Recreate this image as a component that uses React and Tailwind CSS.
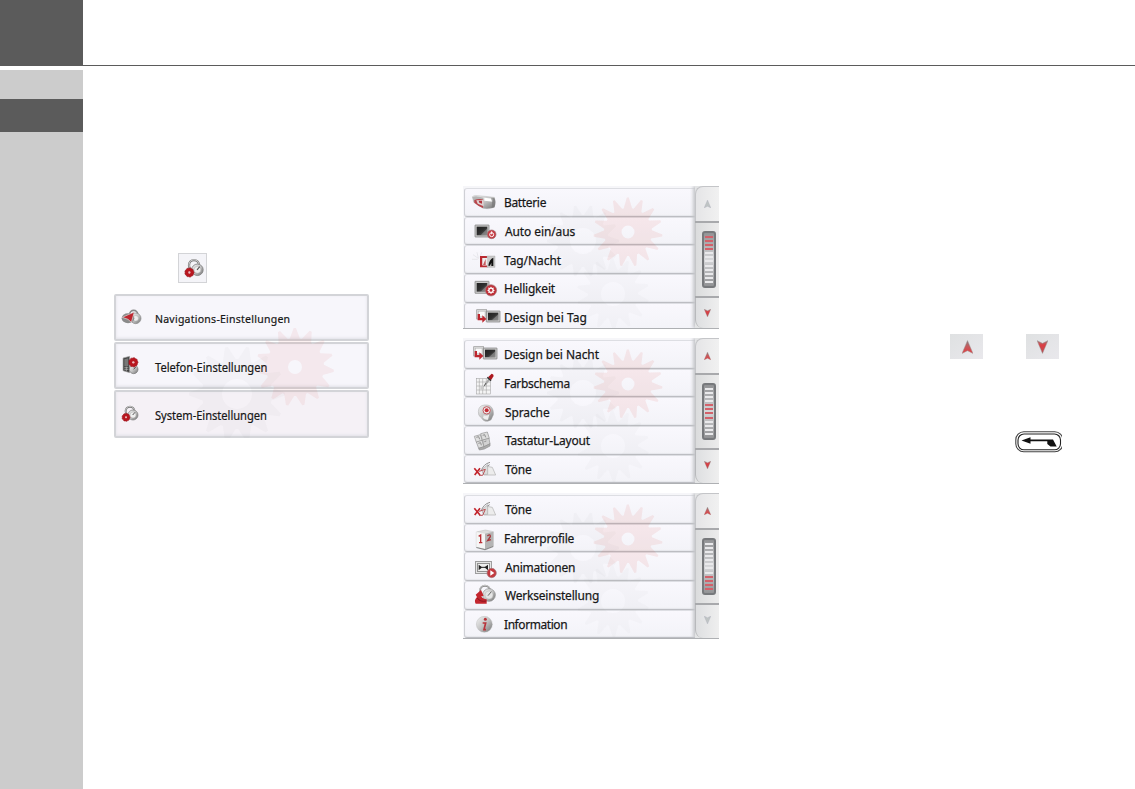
import React from 'react';

function gearPath(cx, cy, outer, inner, teeth, hole, twist = 0) {
  const pts = [];
  for (let i = 0; i < teeth; i++) {
    const step = (Math.PI * 2) / teeth;
    const a = i * step + twist;
    const at = (r, t) => `${(cx + r * Math.cos(t)).toFixed(2)} ${(cy + r * Math.sin(t)).toFixed(2)}`;
    pts.push(at(inner, a - step * 0.42), at(outer, a - step * 0.07), at(outer, a + step * 0.07), at(inner, a + step * 0.42));
  }
  return `M${pts.join('L')}Z M${cx + hole} ${cy}a${hole} ${hole} 0 1 0 ${-2 * hole} 0a${hole} ${hole} 0 1 0 ${2 * hole} 0Z`;
}

function Defs() {
  return (
    <svg className="absolute h-0 w-0" aria-hidden="true">
      <defs>
        <linearGradient id="metal" x1="0" y1="0" x2="1" y2="1">
          <stop offset="0" stopColor="#f4f4f4" />
          <stop offset="0.5" stopColor="#c4c4c4" />
          <stop offset="1" stopColor="#727272" />
        </linearGradient>
        <linearGradient id="dark" x1="0" y1="0" x2="1" y2="1">
          <stop offset="0" stopColor="#202020" />
          <stop offset="0.5" stopColor="#303030" />
          <stop offset="1" stopColor="#777" />
        </linearGradient>
        <linearGradient id="arrowUp" x1="0" y1="0" x2="0" y2="1">
          <stop offset="0" stopColor="#8a7f7f" />
          <stop offset="0.5" stopColor="#c9595c" />
          <stop offset="1" stopColor="#e03c40" />
        </linearGradient>
        <linearGradient id="arrowDown" x1="0" y1="0" x2="0" y2="1">
          <stop offset="0" stopColor="#a08080" />
          <stop offset="0.35" stopColor="#dc3d43" />
          <stop offset="1" stopColor="#b85054" />
        </linearGradient>
      </defs>
    </svg>
  );
}

function RedGear({ x, y, r }) {
  return (
    <g>
      <path d={gearPath(x, y, r, r * 0.92, 9, r * 0.2)} fill="#b9161f" fillRule="evenodd" stroke="#9c1720" strokeWidth="2" strokeLinejoin="round" />
      <circle cx={x} cy={y} r={r * 0.25} fill="#f0b9bb" />
    </g>
  );
}

function Lock() {
  return (
    <g>
      <circle cx="33" cy="24" r="13" fill="none" stroke="#777" strokeWidth="6" />
      <circle cx="33" cy="23" r="13" fill="none" stroke="#d4d4d4" strokeWidth="2.5" />
      <circle cx="42" cy="36" r="15" fill="url(#metal)" stroke="#777" strokeWidth="2" />
      <circle cx="42" cy="36" r="9" fill="#eee" stroke="#999" />
      <path d="M41 36L48 28" stroke="#555" strokeWidth="3" />
    </g>
  );
}

const Monitor = ({ x, y, w, h }) => (
  <g>
    <rect x={x} y={y} width={w} height={h} rx="1" fill="#c9c9c9" stroke="#777" strokeWidth="2" />
    <rect x={x + 5} y={y + 5} width={w - 10} height={h - 10} fill="url(#dark)" />
    <path d={`M${x + w * 0.4} ${y + h - 5}L${x + w - 5} ${y + h * 0.3}V${y + h - 5}Z`} fill="#999" opacity=".6" />
  </g>
);

const icons = {
  battery: (
    <g>
      <path d="M4 17Q8 11 24 14L70 19Q76 34 70 49Q52 56 36 52L8 34Z" fill="url(#metal)" stroke="#aaa" />
      <path d="M4 18Q14 12 36 20V50L8 33Z" fill="#b5b5b5" />
      <path d="M10 27Q24 22 37 26L36 51Q22 46 10 35Z" fill="#b9444a" />
      <path d="M16 28L38 27V46L20 38Z" fill="#ded3d3" />
      <path d="M23 29L33 29V38L25 35Z" fill="#b2343c" />
      <path d="M40 20L66 23V32L40 29Z" fill="#fff" />
      <path d="M60 22Q66 36 61 52L70 49Q76 34 70 21Z" fill="#777" opacity=".7" />
    </g>
  ),
  auto: (
    <g>
      <Monitor x={12} y={15} w={42} h={36} />
      <circle cx="62" cy="43" r="13" fill="#c63b43" stroke="#9d7376" strokeWidth="2" />
      <circle cx="62" cy="44" r="6" fill="none" stroke="#fff" strokeWidth="3" />
      <path d="M62 34V43" stroke="#fff" strokeWidth="3" />
    </g>
  ),
  dayNight: (
    <g>
      <path d="M6 17L23 29M18 10L22 27M32 10L27 25M3 31H20" stroke="#e0e0e4" strokeWidth="2" />
      <path d="M27 21H49V27H35V49H49V55H27Z" fill="#ba2a31" />
      <path d="M48 21H72V55H48Z" fill="#c9c9c9" stroke="#999" />
      <path d="M34 27H49V49H34Z" fill="#eee" />
      <path d="M36 48L44 30V48Z" fill="#c65a5f" />
      <path d="M52 50Q55 30 67 26V51H61V41L57 50Z" fill="#111" />
    </g>
  ),
  brightness: (
    <g>
      <Monitor x={12} y={13} w={42} h={36} />
      <circle cx="60" cy="40" r="17" fill="#bf3139" stroke="#a78183" strokeWidth="2" />
      <path d={gearPath(60, 40, 11, 8, 8, 4.5)} fill="#fff" fillRule="evenodd" />
    </g>
  ),
  design: (
    <g>
      <rect x="17" y="11" width="30" height="28" fill="#d5d5d5" stroke="#999" strokeWidth="2" />
      <rect x="23" y="16" width="19" height="16" fill="#fafafa" stroke="#aaa" />
      <Monitor x={46} y={15} w={41} h={33} />
      <path d="M20 24V43H34V50L46 39L34 28V36H27V24Z" fill="#bd252d" />
    </g>
  ),
  palette: (
    <g>
      <rect x="17" y="20" width="41" height="46" fill="#f4f4f4" stroke="#999" strokeWidth="1.5" />
      <path d="M25 20V66M35 20V66M46 20V66M17 30H58M17 42H58M17 54H58" stroke="#999" strokeWidth="1.5" />
      <path d="M28 42H39V53H28Z" fill="#ccc" />
      <path d="M42 39L56 20" stroke="#a7a7a7" strokeWidth="6" />
      <path d="M39 43L45 33" stroke="#555" strokeWidth="2.5" />
      <path d="M51 16L60 25L68 12Q68 6 62 5Z" fill="#ad1920" />
      <path d="M49 16L60 26" stroke="#333" strokeWidth="4" />
    </g>
  ),
  language: (
    <g>
      <path d="M22 32Q23 13 41 12Q61 10 66 27Q70 42 64 48Q62 59 50 61Q37 62 31 50Q21 45 22 32Z" fill="url(#metal)" stroke="#aaa" strokeWidth="1.5" />
      <circle cx="47" cy="28" r="11" fill="#eee" stroke="#c25a60" strokeWidth="3" />
      <circle cx="47" cy="28" r="6" fill="#c52a34" />
      <path d="M38 43Q50 45 55 40L51 56Q42 58 36 50Z" fill="#eee" />
    </g>
  ),
  keyboard: (
    <g stroke="#909090" strokeWidth="2">
      <path d="M10 22L28 17L34 34L16 40Z" fill="#e1e1e1" />
      <path d="M29 14L49 9L55 28L34 34Z" fill="#ddd" />
      <path d="M16 39L33 34L39 53L23 58Z" fill="#ddd" />
      <path d="M35 33L54 28L57 45L39 53Z" fill="#d2d2d2" />
      <path d="M23 58L39 53L57 44V51L40 60L25 63Z" fill="#aaa" />
      <path d="M16 25L23 23L26 31M35 19L41 17L44 25M22 43L29 41L31 49M40 38L46 36" fill="none" strokeWidth="3" />
    </g>
  ),
  sounds: (
    <g>
      <path d="M37 46L47 25L64 28L74 51H39Z" fill="#ececec" stroke="#b0b0b0" strokeWidth="2" />
      <path d="M30 40Q37 18 57 13M36 45Q43 26 56 20" fill="none" stroke="#929292" strokeWidth="3" />
      <path d="M33 35L50 20V49H37Z" fill="#ddd" stroke="#999" strokeWidth="1.5" />
      <path d="M10 31L27 51M11 51L27 31" stroke="#c2232b" strokeWidth="5" />
      <path d="M24 40L43 34L35 52H24" fill="none" stroke="#ba5056" strokeWidth="3" />
    </g>
  ),
  profile: (
    <g>
      <path d="M16 15L43 9L67 14V56L43 66L16 60Z" fill="#ddd" stroke="#bbb" strokeWidth="1.5" />
      <path d="M16 15L42 20V66L16 60Z" fill="#f5f5f5" />
      <path d="M42 20L67 14V56L42 66Z" fill="#b4b4b4" />
      <path d="M16 60L42 66L67 56V60L42 70L16 63Z" fill="#888" />
      <path d="M23 28L29 24V46M24 47H34" fill="none" stroke="#bc3037" strokeWidth="4" />
      <path d="M49 27Q59 19 58 29L50 41L60 38" fill="none" stroke="#a8383d" strokeWidth="4" />
    </g>
  ),
  animation: (
    <g>
      <rect x="14" y="16" width="47" height="37" fill="#e5e5e5" stroke="#777" strokeWidth="2" />
      <rect x="20" y="22" width="35" height="25" fill="#efefef" stroke="#666" strokeWidth="2" />
      <path d="M23 26L34 34L23 43ZM51 26L40 34L51 43Z" fill="#222" />
      <path d="M32 34H43" stroke="#222" strokeWidth="3" />
      <circle cx="62" cy="51" r="14" fill="#c33a40" stroke="#a4787b" strokeWidth="2" />
      <path d="M58 43L70 51L58 59Z" fill="#fff" />
    </g>
  ),
  factory: (
    <g>
      <circle cx="42" cy="20" r="15" fill="none" stroke="#888" strokeWidth="6" />
      <circle cx="42" cy="20" r="16" fill="none" stroke="#e4e4e4" strokeWidth="2" />
      <circle cx="54" cy="33" r="19" fill="url(#metal)" stroke="#888" strokeWidth="2" />
      <circle cx="54" cy="33" r="12" fill="#e5e5e5" stroke="#aaa" />
      <path d="M51 35L61 23" stroke="#666" strokeWidth="3" />
      <path d="M14 32L30 18L38 35L31 37Q34 45 47 46V59H14Q8 49 18 39Z" fill="#c3262e" />
      <path d="M19 42Q27 55 46 51" fill="none" stroke="#8c141e" strokeWidth="3" />
    </g>
  ),
  info: (
    <g>
      <circle cx="40" cy="34" r="24" fill="url(#metal)" stroke="#aaa" strokeWidth="1" />
      <circle cx="43" cy="19" r="4.5" fill="#b8343b" />
      <path d="M35 30H44L39 50H45" fill="none" stroke="#b8343b" strokeWidth="5" />
    </g>
  ),
  system: (
    <g>
      <Lock />
      <RedGear x={21} y={43} r={12} />
    </g>
  ),
  navigation: (
    <g>
      <circle cx="44" cy="22" r="12" fill="none" stroke="#888" strokeWidth="5" />
      <circle cx="50" cy="34" r="16" fill="url(#metal)" stroke="#888" strokeWidth="2" />
      <circle cx="50" cy="34" r="8" fill="#eee" stroke="#aaa" />
      <ellipse cx="27" cy="34" rx="19" ry="15" fill="#8a8a8a" />
      <path d="M10 31L46 15L37 46L27 37Z" fill="#bd252e" stroke="#ddd" strokeWidth="2" />
    </g>
  ),
  phone: (
    <g>
      <path d="M12 9L32 4V53L12 47Z" fill="#444" stroke="#aaa" strokeWidth="2" />
      <path d="M16 13L28 10V34L16 34Z" fill="#777" />
      <path d="M16 38H28M16 43H28M22 35V48" stroke="#bbb" strokeWidth="2" />
      <circle cx="44" cy="43" r="13" fill="url(#metal)" stroke="#777" strokeWidth="2" />
      <path d="M44 43L50 36" stroke="#555" strokeWidth="3" />
      <RedGear x={43} y={22} r={14} />
    </g>
  ),
};

function Icon({ name, shift = 0 }) {
  return (
    <svg className="h-[22px] w-7 shrink-0 overflow-visible" viewBox={`${shift} 0 84 66`}>
      {icons[name]}
    </svg>
  );
}

function Arrow({ down, muted, className }) {
  const fill = muted ? '#bfc4c4' : down ? 'url(#arrowDown)' : 'url(#arrowUp)';
  return (
    <svg className={className} viewBox="0 0 12 14">
      <path d={down ? 'M0 0L6 3L12 0L6 14Z' : 'M6 0L12 14L6 11L0 14Z'} fill={fill} stroke={muted ? '#aab' : '#999'} strokeWidth=".5" />
    </svg>
  );
}

function Scroller({ active, last, first }) {
  return (
    <div className="relative flex w-6 shrink-0 flex-col bg-[#e3e4e5] shadow-[-2px_0_3px_#c6c7cb]">
      <div className="flex h-[35px] items-center justify-center rounded-tl-lg border-l border-t border-[#c4c5c8] bg-linear-to-r from-[#e5e5e7] to-[#f1f1f1]">
        <Arrow muted={first} className="h-2 w-[7px]" />
      </div>
      <div className="h-0.5 bg-[#a8a9ac]" />
      <div className="flex h-[73px] items-start justify-center border-l border-[#c5c6c8] bg-linear-to-r from-[#dbdcdd] to-[#ececec] pl-0.5 pt-2">
        <div className="flex h-[57px] w-[14px] flex-col justify-between rounded-[3px] border-2 border-[#77797c] bg-linear-to-b from-[#929395] via-[#d6d7d9] to-[#929395] px-px py-[3px]">
          {Array.from({ length: 12 }, (_, i) => (
            <span key={i} className={i >= active && i < active + 4 ? 'h-0.5 bg-[#d3616a]' : 'h-0.5 bg-[#e9e9eb]'} />
          ))}
        </div>
      </div>
      <div className="h-0.5 bg-[#a8a9ac]" />
      <div className="flex min-h-0 flex-1 items-start justify-center rounded-bl-lg border-l border-[#b8b9bc] bg-linear-to-r from-[#dedfe1] to-[#efefef] pt-[11px]">
        <Arrow down muted={last} className="h-2 w-[7px]" />
      </div>
    </div>
  );
}

function MenuPanel({ rows, active, first, last, height }) {
  return (
    <section className={`relative flex w-64 overflow-hidden border-b border-[#aeb0b3] bg-[#f6f6f9] ${height}`}>
      <div className="flex w-[232px] flex-col pl-px pt-0.5">
        {rows.map(([icon, label, spacing, indent, shift]) => (
          <div key={label} className="flex h-[28.7px] shrink-0 items-center rounded-l-[3px] border border-r-0 border-[#cfd0d5] border-t-[#dddee3] border-b-[#bcbdc2] bg-linear-to-b from-[#f9f8fd] to-[#f3f3f8] pl-[6px] shadow-[inset_0_-1px_1px_#e6e7eb]">
            <Icon name={icon} shift={shift} />
            <span className={`mt-px origin-left scale-x-[0.92] whitespace-nowrap font-['Noto_Sans',sans-serif] text-[13px] leading-none text-[#161616] [-webkit-text-stroke:0.25px_#161616] ${spacing} ${indent}`}>{label}</span>
          </div>
        ))}
      </div>
      <svg className="pointer-events-none absolute left-0 top-0 h-[146px] w-64" viewBox="0 0 256 146">
        <path d={gearPath(120, 55, 36, 26, 14, 13)} fill="#777" opacity=".035" fillRule="evenodd" />
        <path d={gearPath(150, 108, 36, 25, 14, 12, 0.2)} fill="#777" opacity=".03" fillRule="evenodd" />
        <path d={gearPath(165, 46, 34.5, 24, 15, 6.5, 0.1)} fill="#db3e32" opacity=".085" fillRule="evenodd" />
      </svg>
      <Scroller active={active} first={first} last={last} />
    </section>
  );
}

const pages = [
  {
    height: 'h-[143px]', active: 0, first: true,
    rows: [
      ['battery', 'Batterie', 'tracking-[-0.35px]', 'ml-[5px]', 0],
      ['auto', 'Auto ein/aus', 'tracking-[-0.1px]', 'ml-[6px]', 0],
      ['dayNight', 'Tag/Nacht', 'tracking-[-0.05px]', 'ml-[5px]', 0],
      ['brightness', 'Helligkeit', 'tracking-[-0.2px]', 'ml-[5px]', 0],
      ['design', 'Design bei Tag', 'tracking-[0.05px]', 'ml-[5px]', 0],
    ],
  },
  {
    height: 'h-[146px]', active: 4,
    rows: [
      ['design', 'Design bei Nacht', 'tracking-[-0.05px]', 'ml-[5px]', 9],
      ['palette', 'Farbschema', 'tracking-[-0.3px]', 'ml-[5px]', 0],
      ['language', 'Sprache', 'tracking-[-0.1px]', 'ml-[6px]', 0],
      ['keyboard', 'Tastatur-Layout', 'tracking-[-0.2px]', 'ml-[6px]', 0],
      ['sounds', 'Töne', 'tracking-[-0.2px]', 'ml-[6px]', 0],
    ],
  },
  {
    height: 'h-[146px]', active: 8, last: true,
    rows: [
      ['sounds', 'Töne', 'tracking-[-0.2px]', 'ml-[6px]', 0],
      ['profile', 'Fahrerprofile', 'tracking-[-0.25px]', 'ml-[5px]', 0],
      ['animation', 'Animationen', 'tracking-[-0.2px]', 'ml-[6px]', 0],
      ['factory', 'Werkseinstellung', 'tracking-[-0.2px]', 'ml-[6px]', 0],
      ['info', 'Information', 'tracking-[-0.45px]', 'ml-[5px]', 0],
    ],
  },
];

function SettingsList() {
  const rows = [
    ['navigation', 'Navigations-Einstellungen', 'h-[47px]', 'mt-1 text-[10.5px] tracking-[0.25px]'],
    ['phone', 'Telefon-Einstellungen', 'h-[47px]', 'mt-1 origin-left scale-x-[0.93] text-[12px] tracking-[-0.05px]'],
    ['system', 'System-Einstellungen', 'h-[48px]', 'mt-1 origin-left scale-x-[0.93] text-[12px] tracking-[-0.05px]'],
  ];
  return (
    <div className="relative mt-[11px] flex w-[255px] flex-col gap-px">
      {rows.map(([icon, label, height, type], i) => (
        <div key={label} className={`flex items-center rounded-[2px] border-2 border-[#d3d4d8] pl-[3px] shadow-[inset_0_-1px_3px_#e1e1e7] ${height} ${i === 2 ? 'bg-[#f5f1f6]' : 'bg-[#f7f6fb]'}`}>
          <Icon name={icon} />
          <span className={`ml-[8px] whitespace-nowrap font-['Noto_Sans',sans-serif] leading-none text-[#161616] [-webkit-text-stroke:0.2px_#161616] ${type}`}>{label}</span>
        </div>
      ))}
      <svg className="pointer-events-none absolute inset-0 h-full w-full" viewBox="0 0 255 144">
        <path d={gearPath(123, 100, 48, 35, 14, 15)} fill="#777" opacity=".035" fillRule="evenodd" />
        <path d={gearPath(181, 73, 39, 29, 15, 7, 0.1)} fill="#db3e32" opacity=".07" fillRule="evenodd" />
      </svg>
    </div>
  );
}

export default function App() {
  return (
    <div className="flex h-[789px] w-[1135px] overflow-hidden bg-white">
      <Defs />
      <aside className="flex w-[83px] shrink-0 flex-col">
        <div className="h-[66px] bg-[#5b5b5b]" />
        <div className="mt-1 h-[29px] bg-[#cccccc]" />
        <div className="h-[33px] bg-[#5b5b5b]" />
        <div className="flex-1 bg-[#cccccc]" />
      </aside>
      <div className="flex flex-1 flex-col">
        <header className="h-[66px] border-b border-[#5b5b5b]" />
        <main className="flex pl-[31px]">
          <div className="w-[255px] pt-[187px]">
            <div className="ml-16 h-[30px] w-[29px] border border-[#d3d4d7] bg-[#f4f4f8]">
              <svg className="h-7 w-[27px]" viewBox="0 0 81 84">
                <g transform="translate(7 6) scale(1.15)">{icons.system}</g>
              </svg>
            </div>
            <SettingsList />
          </div>
          <div className="ml-[94px] flex w-64 flex-col gap-[9px] pt-[120px]">
            {pages.map((page, i) => (
              <MenuPanel key={i} {...page} />
            ))}
          </div>
          <div className="ml-[231px] flex w-[112px] flex-col pt-[268px]">
            <div className="flex gap-[43px]">
              <div className="flex h-[25px] w-[33px] items-center justify-center bg-linear-to-br from-[#dfe1e2] to-[#e9e8ec] pl-0.5">
                <Arrow className="h-[14px] w-[11px]" />
              </div>
              <div className="flex h-[25px] w-[33px] items-center justify-center bg-linear-to-br from-[#dfe1e2] to-[#e9e8ec]">
                <Arrow down className="h-[14px] w-[11px]" />
              </div>
            </div>
            <svg className="ml-[65px] mt-[72px] h-[22px] w-[47px]" viewBox="0 0 47 22">
              <rect x=".8" y=".8" width="47" height="20" rx="8" fill="#fff" stroke="#444" strokeWidth="1.1" />
              <rect x="3" y="3" width="42.5" height="15.8" rx="6" fill="#fff" stroke="#222" strokeWidth="1.1" />
              <path d="M6.5 9.4L15.5 6.2V8.6H38L41.7 15.4H35.5L32.3 13V10.2H15.5V12.7Z" fill="#111" />
            </svg>
          </div>
        </main>
      </div>
    </div>
  );
}
